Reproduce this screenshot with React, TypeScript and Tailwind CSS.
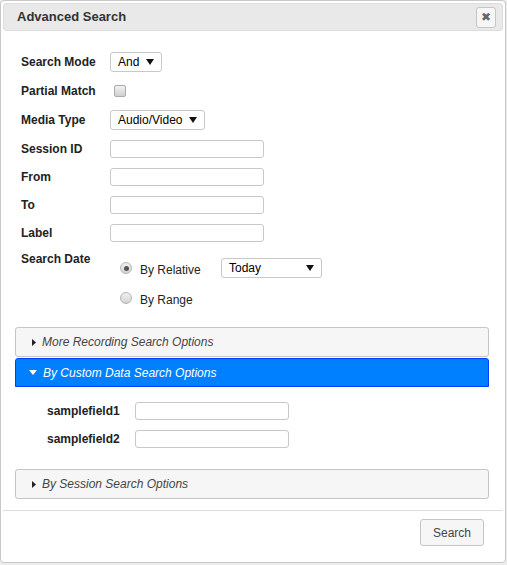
import React from "react";

const font = { fontFamily: '"Liberation Sans", Arial, sans-serif' };

function Caret({ className = "" }: { className?: string }) {
  return (
    <svg width="8" height="6" viewBox="0 0 8 6" className={className}>
      <path d="M0 0 L8 0 L4 6 Z" fill="#111" />
    </svg>
  );
}

function Select({ value, width }: { value: string; width: string }) {
  return (
    <div
      className={`flex h-[20px] items-center justify-between rounded-[3px] border border-[#c8c8c8] bg-white pl-[7px] pr-[7px] text-[12px] text-black ${width}`}
    >
      <span>{value}</span>
      <Caret />
    </div>
  );
}

function TextBox({ width = "w-[154px]" }: { width?: string }) {
  return <div className={`h-[18px] rounded-[3px] border border-[#c8c8c8] bg-white ${width}`} />;
}

function Radio({ checked }: { checked?: boolean }) {
  return (
    <span className="flex h-[12px] w-[12px] items-center justify-center rounded-full border border-[#b5b5b5] bg-gradient-to-b from-[#f0f0f0] to-[#d4d4d4]">
      {checked && <span className="h-[5px] w-[5px] rounded-full bg-[#555]" />}
    </span>
  );
}

function Row({ label, h = "h-[29px]", children }: { label: string; h?: string; children: React.ReactNode }) {
  return (
    <div className={`flex items-center ${h}`}>
      <div className="w-[89px] text-[12px] font-bold text-[#222]">{label}</div>
      {children}
    </div>
  );
}

function AccordionHeader({ title, active }: { title: string; active?: boolean }) {
  if (active) {
    return (
      <div className="flex h-[29px] items-center rounded-t-[3px] border border-[#003eff] bg-[#007fff] pl-[13px] text-[12px] italic text-white">
        <svg width="8" height="5" viewBox="0 0 8 5" className="mr-[6px]">
          <path d="M0 0 L8 0 L4 5 Z" fill="#fff" />
        </svg>
        {title}
      </div>
    );
  }
  return (
    <div className="flex h-[30px] items-center rounded-[3px] border border-[#c5c5c5] bg-[#f6f6f6] pl-[16px] text-[12px] italic text-[#454545]">
      <svg width="4" height="7" viewBox="0 0 4 7" className="mr-[6px]">
        <path d="M0 0 L4 3.5 L0 7 Z" fill="#222" />
      </svg>
      {title}
    </div>
  );
}

export default function App() {
  return (
    <div className="h-[565px] w-[507px] bg-[#ececec]" style={font}>
      <div className="flex h-[563px] w-[506px] flex-col rounded-[4px] border border-[#c8c8c8] bg-white p-[2px]">
        {/* title bar */}
        <div className="flex h-[28px] items-center justify-between rounded-[3px] border border-[#dddddd] bg-[#e9e9e9] pl-[13px] pr-[6px]">
          <span className="text-[13px] font-bold text-[#333]">Advanced Search</span>
          <button className="flex h-[21px] w-[20px] items-center justify-center rounded-[3px] border border-[#c5c5c5] bg-[#f6f6f6] text-[12px] leading-none text-[#666]">
            ✖
          </button>
        </div>

        {/* form */}
        <div className="flex flex-col px-[18px] pt-[16px]">
          <Row label="Search Mode">
            <Select value="And" width="w-[52px]" />
          </Row>
          <Row label="Partial Match">
            <span className="ml-[4px] h-[12px] w-[12px] rounded-[2px] border border-[#aaa] bg-gradient-to-b from-[#f2f2f2] to-[#d0d0d0]" />
          </Row>
          <Row label="Media Type">
            <Select value="Audio/Video" width="w-[95px]" />
          </Row>
          <Row label="Session ID">
            <TextBox />
          </Row>
          <Row label="From" h="h-[28px]">
            <TextBox />
          </Row>
          <Row label="To" h="h-[28px]">
            <TextBox />
          </Row>
          <Row label="Label" h="h-[28px]">
            <TextBox />
          </Row>
          <div className="flex">
            <div className="w-[89px] pt-[3px] text-[12px] font-bold text-[#222]">Search Date</div>
            <div className="ml-[10px] mt-[11px] flex flex-col gap-[10px]">
              <div className="flex h-[20px] items-center">
                <Radio checked />
                <span className="ml-[8px] w-[81px] pt-[3px] text-[12px] text-[#222]">By Relative</span>
                <Select value="Today" width="w-[101px]" />
              </div>
              <div className="flex h-[20px] items-center">
                <Radio />
                <span className="ml-[8px] pt-[3px] text-[12px] text-[#222]">By Range</span>
              </div>
            </div>
          </div>
        </div>

        {/* accordion */}
        <div className="mt-[19px] flex flex-col pl-[12px] pr-[14px]">
          <AccordionHeader title="More Recording Search Options" />
          <div className="mt-[1px]">
            <AccordionHeader title="By Custom Data Search Options" active />
          </div>
          <div className="flex flex-col pl-[32px] pt-[10px] pb-[16px]">
            <div className="flex h-[28px] items-center">
              <div className="w-[88px] text-[12px] font-bold text-[#222]">samplefield1</div>
              <TextBox />
            </div>
            <div className="flex h-[28px] items-center">
              <div className="w-[88px] text-[12px] font-bold text-[#222]">samplefield2</div>
              <TextBox />
            </div>
          </div>
          <AccordionHeader title="By Session Search Options" />
        </div>

        {/* footer */}
        <div className="mt-[11px] flex justify-end border-t border-[#dddddd] pr-[19px] pt-[8px]">
          <button className="h-[27px] w-[64px] rounded-[3px] border border-[#c5c5c5] bg-[#f6f6f6] text-[12px] text-[#454545]">
            Search
          </button>
        </div>
      </div>
    </div>
  );
}
